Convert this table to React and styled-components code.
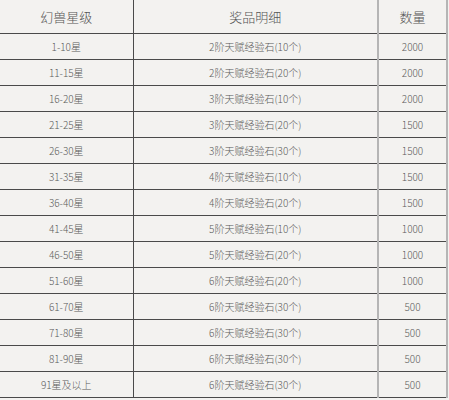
import styled, { createGlobalStyle } from 'styled-components'

const GlobalStyle = createGlobalStyle`
  html, body {
    margin: 0;
    padding: 0;
    background: #f3f2f0;
  }
  body {
    font-family: "Microsoft YaHei", "Noto Sans CJK SC", "Noto Sans", sans-serif;
    color: #555;
  }
`

const Page = styled.div`
  width: 449px;
  height: 400px;
  overflow: hidden;
  background: #f3f2f0;
`

const Table = styled.table`
  width: 447px;
  border-collapse: collapse;
  table-layout: fixed;
`

const HeadCell = styled.th`
  height: 33px;
  padding: 0;
  font-size: 13px;
  font-weight: 300;
  color: #555;
  text-align: center;
  border-bottom: 1px solid #4a4a4a;
  border-right: ${p => (p.$soft ? '2px solid #b5b5b5' : '1px solid #4a4a4a')};
`

const Cell = styled.td`
  height: 25px;
  padding: 0;
  font-size: 10px;
  font-weight: 300;
  color: #5a5a5a;
  text-align: center;
  border-bottom: 1px solid #4a4a4a;
  border-right: ${p => (p.$soft ? '2px solid #b5b5b5' : '1px solid #4a4a4a')};
`

const rows = [
  ['1-10星', '2阶天赋经验石(10个)', '2000'],
  ['11-15星', '2阶天赋经验石(20个)', '2000'],
  ['16-20星', '3阶天赋经验石(10个)', '2000'],
  ['21-25星', '3阶天赋经验石(20个)', '1500'],
  ['26-30星', '3阶天赋经验石(30个)', '1500'],
  ['31-35星', '4阶天赋经验石(10个)', '1500'],
  ['36-40星', '4阶天赋经验石(20个)', '1500'],
  ['41-45星', '5阶天赋经验石(10个)', '1000'],
  ['46-50星', '5阶天赋经验石(20个)', '1000'],
  ['51-60星', '6阶天赋经验石(20个)', '1000'],
  ['61-70星', '6阶天赋经验石(30个)', '500'],
  ['71-80星', '6阶天赋经验石(30个)', '500'],
  ['81-90星', '6阶天赋经验石(30个)', '500'],
  ['91星及以上', '6阶天赋经验石(30个)', '500'],
]

export default function App() {
  return (
    <Page>
      <GlobalStyle />
      <Table>
        <colgroup>
          <col style={{ width: 133 }} />
          <col style={{ width: 245 }} />
          <col style={{ width: 69 }} />
        </colgroup>
        <thead>
          <tr>
            <HeadCell>幻兽星级</HeadCell>
            <HeadCell $soft>奖品明细</HeadCell>
            <HeadCell $soft>数量</HeadCell>
          </tr>
        </thead>
        <tbody>
          {rows.map((r, i) => (
            <tr key={i}>
              <Cell>{r[0]}</Cell>
              <Cell $soft>{r[1]}</Cell>
              <Cell $soft>{r[2]}</Cell>
            </tr>
          ))}
        </tbody>
      </Table>
    </Page>
  )
}
